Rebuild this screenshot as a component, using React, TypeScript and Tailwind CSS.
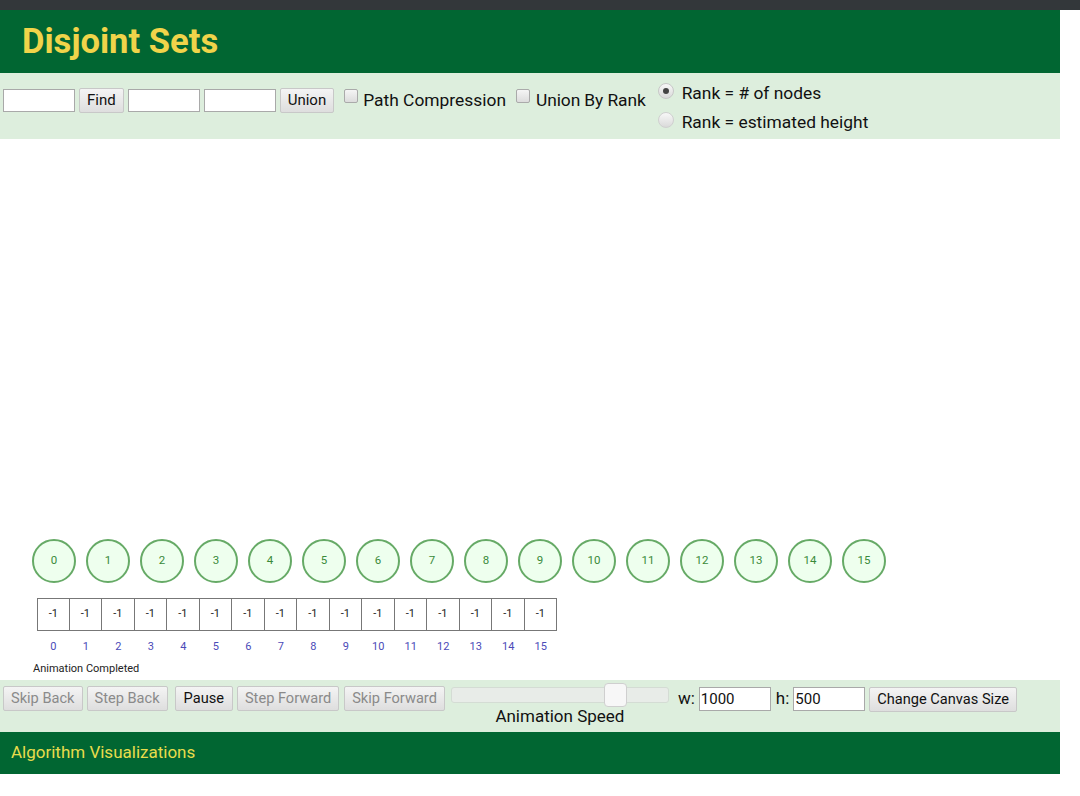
import React from "react";

const nodes = Array.from({ length: 16 }, (_, i) => i);

function Btn({ children, dim, cls }: { children: React.ReactNode; dim?: boolean; cls: string }) {
  return (
    <button
      className={
        "h-[25px] border border-[#c8c8c8] rounded-[2px] bg-gradient-to-b from-[#f4f4f4] to-[#dedede] leading-none " +
        (dim ? "text-[#8a8a8a] " : "text-[#111] ") +
        cls
      }
    >
      {children}
    </button>
  );
}

function Box({ w }: { w: string }) {
  return <div className={"h-[23px] bg-white border border-[#a9a9a9] " + w} />;
}

export default function App() {
  return (
    <div className="w-[1080px] h-[796px] bg-white overflow-hidden" style={{ fontFamily: "Roboto, 'Liberation Sans', sans-serif" }}>
      <div className="h-[10px] bg-[#33373a]" />
      <div className="w-[1060px]">
        <div className="h-[63px] bg-[#016632] flex items-center pl-[22px]">
          <h1 className="text-[34.6px] font-bold text-[#f0d44a] leading-none">Disjoint Sets</h1>
        </div>
        <div className="h-[66px] bg-[#ddeedd] flex items-start pl-[3px] pt-[12px] text-[17.4px] text-[#111]">
          <div className="flex items-center gap-[4px] mt-[3px]">
            <Box w="w-[72px]" />
            <Btn cls="px-[7px] text-[15px]">Find</Btn>
            <Box w="w-[72px]" />
            <Box w="w-[72px]" />
            <Btn cls="px-[7px] text-[15px]">Union</Btn>
          </div>
          <div className="flex items-start ml-[10px] mt-[3px]">
            <span className="w-[14px] h-[14px] rounded-[2px] border border-[#aaa] bg-gradient-to-b from-[#f5f5f5] to-[#dcdcdc] mt-[1px]" />
            <span className="ml-[5px] mt-[1px] leading-[22px]">Path Compression</span>
            <span className="w-[14px] h-[14px] rounded-[2px] border border-[#aaa] bg-gradient-to-b from-[#f5f5f5] to-[#dcdcdc] ml-[10px] mt-[1px]" />
            <span className="ml-[6px] mt-[1px] leading-[22px] tracking-[-0.1px]">Union By Rank</span>
          </div>
          <div className="flex flex-col ml-[12px] mt-[-3px] gap-[7px]">
            <div className="flex items-center">
              <span className="w-[16px] h-[16px] rounded-full border border-[#c8c8c8] bg-gradient-to-b from-[#f8f8f8] to-[#dadada] flex items-center justify-center mt-[-4px]">
                <span className="w-[6px] h-[6px] rounded-full bg-[#444]" />
              </span>
              <span className="ml-[8px] leading-[22px]">Rank = # of nodes</span>
            </div>
            <div className="flex items-center">
              <span className="w-[16px] h-[16px] rounded-full border border-[#d0d0d0] bg-gradient-to-b from-[#f8f8f8] to-[#dadada] mt-[-4px]" />
              <span className="ml-[8px] leading-[22px]">Rank = estimated height</span>
            </div>
          </div>
        </div>
        <div className="h-[541px] bg-white flex flex-col pt-[399px]">
          <div className="flex pl-[32px] gap-[10px] mt-[1px]">
            {nodes.map((n) => (
              <div
                key={n}
                className="w-[44px] h-[44px] rounded-full border-[2px] border-[#66aa66] bg-[#eeffee] flex items-center justify-center text-[11.5px] text-[#3a8a3a]"
              >
                {n}
              </div>
            ))}
          </div>
          <div className="flex pl-[37px] mt-[15px]">
            {nodes.map((n) => (
              <div
                key={n}
                className={
                  "w-[32.5px] h-[33px] border-y border-r border-[#777] flex items-center justify-center text-[11px] text-[#222] " +
                  (n === 0 ? "border-l" : "")
                }
              >
                -1
              </div>
            ))}
          </div>
          <div className="flex pl-[37px] mt-[6px]">
            {nodes.map((n) => (
              <div key={n} className="w-[32.5px] text-center text-[11px] leading-[20px] text-[#4b4bb8]">
                {n}
              </div>
            ))}
          </div>
          <div className="pl-[33px] text-[11px] leading-[14px] text-[#222] mt-[5px]">Animation Completed</div>
        </div>
        <div className="h-[52px] bg-[#ddeedd] flex items-start pl-[3px] pt-[6px] text-[#111]">
          <div className="flex items-center gap-[4px]">
            <Btn dim cls="px-[7px] text-[14.6px]">Skip Back</Btn>
            <Btn dim cls="px-[7px] text-[14.6px]">Step Back</Btn>
            <Btn cls="px-[8px] text-[14.6px] ml-[3px]">Pause</Btn>
            <Btn dim cls="px-[7px] text-[14.6px]">Step Forward</Btn>
            <Btn dim cls="px-[7px] text-[14.6px] ml-[1px]">Skip Forward</Btn>
          </div>
          <div className="flex flex-col items-center ml-[6px] w-[218px]">
            <div className="relative w-[218px] h-[16px] mt-[1px] rounded-[3px] border border-[#d4dcd4] bg-[#e8ece8]">
              <div className="absolute left-[152px] top-[-5px] w-[23px] h-[24px] rounded-[4px] border border-[#cfcfcf] bg-[#f7f7f7]" />
            </div>
            <div className="text-[17px] leading-[20px] mt-[3px]">Animation Speed</div>
          </div>
          <div className="flex items-center ml-[9px] text-[17px]">
            <span>w:</span>
            <div className="ml-[4px] w-[72px] h-[24px] bg-white border border-[#a9a9a9] text-[15px] leading-[22px] pl-[1px]">1000</div>
            <span className="ml-[5px]">h:</span>
            <div className="ml-[4px] w-[72px] h-[24px] bg-white border border-[#a9a9a9] text-[15px] leading-[22px] pl-[1px]">500</div>
            <div className="ml-[4px]">
              <Btn cls="px-[7px] text-[14.6px]">Change Canvas Size</Btn>
            </div>
          </div>
        </div>
        <div className="h-[42px] bg-[#016632] flex items-center pl-[11px]">
          <span className="text-[17px] text-[#e8dc4c]">Algorithm Visualizations</span>
        </div>
      </div>
    </div>
  );
}
